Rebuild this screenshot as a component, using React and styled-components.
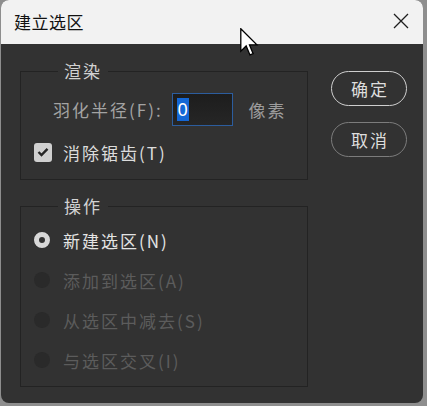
import React from "react";
import styled, { createGlobalStyle } from "styled-components";

const Global = createGlobalStyle`
  html, body { margin: 0; padding: 0; }
  body {
    width: 427px; height: 406px; overflow: hidden;
    background: #8e8e8e;
    font-family: "Noto Sans CJK SC", "Noto Sans", sans-serif;
  }
`;

const Window = styled.div`
  position: relative;
  margin-left: 1px;
  width: 422px;
  height: 403px;
  background: #323232;
  border-radius: 8px 8px 8px 8px;
  overflow: hidden;
  display: flex;
  flex-direction: column;
`;

const TitleBar = styled.div`
  height: 44px;
  flex: none;
  background: #f2f2f2;
  display: flex;
  align-items: center;
  justify-content: space-between;
  padding: 0 14px 0 13px;
`;

const Title = styled.div`
  font-size: 17px;
  letter-spacing: 0.5px;
  color: #111;
  line-height: 1;
  margin-top: -2px;
`;

const CloseBtn = styled.svg`
  width: 16px;
  height: 16px;
  margin-top: -2px;
`;

const Body = styled.div`
  flex: 1;
  display: flex;
  gap: 23px;
  padding: 16px 15px 0 19px;
`;

const LeftCol = styled.div`
  width: 288px;
  display: flex;
  flex-direction: column;
  gap: 15px;
`;

const Group = styled.fieldset`
  margin: 0;
  border: 1px solid #232323;
  padding: ${(p) => p.$pad};
  display: flex;
  flex-direction: column;
  gap: ${(p) => p.$gap};
  min-width: 0;
`;

const Legend = styled.legend`
  margin-left: 24px;
  padding: 0 6px;
  font-size: 17px;
  letter-spacing: 2px;
  line-height: 22px;
  color: #d2d2d2;
`;

const Row = styled.div`
  display: flex;
  align-items: center;
  height: ${(p) => p.$h || "24px"};
  padding-left: ${(p) => p.$indent || "0"};
`;

const Label = styled.span`
  font-size: 17px;
  letter-spacing: 2px;
  line-height: 1;
  color: ${(p) => p.$color || "#dcdcdc"};
`;

const NumInput = styled.div`
  box-sizing: border-box;
  width: 61px;
  height: 33px;
  margin: 0 16px 0 9px;
  border: 1px solid #2c5d9e;
  background: linear-gradient(#1d1d1d, #262626);
  display: flex;
  align-items: center;
  padding-left: 4px;
`;

const Selected = styled.span`
  background: #1467d6;
  color: #fff;
  font-family: "Noto Sans", sans-serif;
  font-size: 18px;
  line-height: 23px;
  height: 23px;
  padding: 0 1px;
`;

const CheckBox = styled.span`
  width: 18px;
  height: 19px;
  border-radius: 3px;
  background: #d0d0d0;
  display: flex;
  align-items: center;
  justify-content: center;
  margin-right: 11px;
`;

const Radio = styled.span`
  width: 16px;
  height: 16px;
  border-radius: 50%;
  flex: none;
  box-sizing: border-box;
  background: ${(p) => (p.$on ? "#323232" : "#2a2a2a")};
  border: ${(p) => (p.$on ? "5px solid #d8d8d8" : "none")};
  margin-right: 13px;
`;

const RightCol = styled.div`
  display: flex;
  flex-direction: column;
  gap: 16px;
  padding-top: 11px;
`;

const Pill = styled.div`
  width: 76px;
  height: 35px;
  box-sizing: border-box;
  border-radius: 18px;
  border: 1.5px solid ${(p) => (p.$primary ? "#cfcfcf" : "#7c7c7c")};
  display: flex;
  align-items: center;
  justify-content: center;
  font-size: 17px;
  letter-spacing: 2px;
  color: #dedede;
  padding-left: 2px;
`;

const Cursor = styled.svg`
  position: absolute;
  left: 239px;
  top: 28px;
  width: 19px;
  height: 29px;
`;

const options = [
  { text: "新建选区(N)", on: true },
  { text: "添加到选区(A)" },
  { text: "从选区中减去(S)" },
  { text: "与选区交叉(I)" },
];

export default function App() {
  return (
    <>
      <Global />
      <Window>
        <TitleBar>
          <Title>建立选区</Title>
          <CloseBtn viewBox="0 0 16 16">
            <path d="M1 1 L15 15 M15 1 L1 15" stroke="#1e1e1e" strokeWidth="1.3" fill="none" />
          </CloseBtn>
        </TitleBar>
        <Body>
          <LeftCol>
            <Group $pad="11px 0 17px 13px" $gap="16px">
              <Legend>渲染</Legend>
              <Row $h="33px" $indent="19px">
                <Label $color="#a3a3a3">羽化半径(F):</Label>
                <NumInput>
                  <Selected>0</Selected>
                </NumInput>
                <Label $color="#9c9c9c">像素</Label>
              </Row>
              <Row $h="20px">
                <CheckBox>
                  <svg width="12" height="10" viewBox="0 0 12 10">
                    <path d="M1.5 5 L4.5 8 L10.5 1.8" stroke="#262626" strokeWidth="2.4" fill="none" />
                  </svg>
                </CheckBox>
                <Label $color="#dcdcdc">消除锯齿(T)</Label>
              </Row>
            </Group>
            <Group $pad="11px 0 14px 13px" $gap="16px">
              <Legend>操作</Legend>
              {options.map((o) => (
                <Row key={o.text}>
                  <Radio $on={o.on} />
                  <Label $color={o.on ? "#e4e4e4" : "#5c5c5c"}>{o.text}</Label>
                </Row>
              ))}
            </Group>
          </LeftCol>
          <RightCol>
            <Pill $primary>确定</Pill>
            <Pill>取消</Pill>
          </RightCol>
        </Body>
        <Cursor viewBox="0 0 13 20">
          <path d="M0.5 0.5 L0.5 16 L4.2 12.4 L6.8 18.6 L9 17.7 L6.5 11.6 L11.6 11.6 Z" fill="#fff" stroke="#000" strokeWidth="0.9" strokeLinejoin="miter" />
        </Cursor>
      </Window>
    </>
  );
}
